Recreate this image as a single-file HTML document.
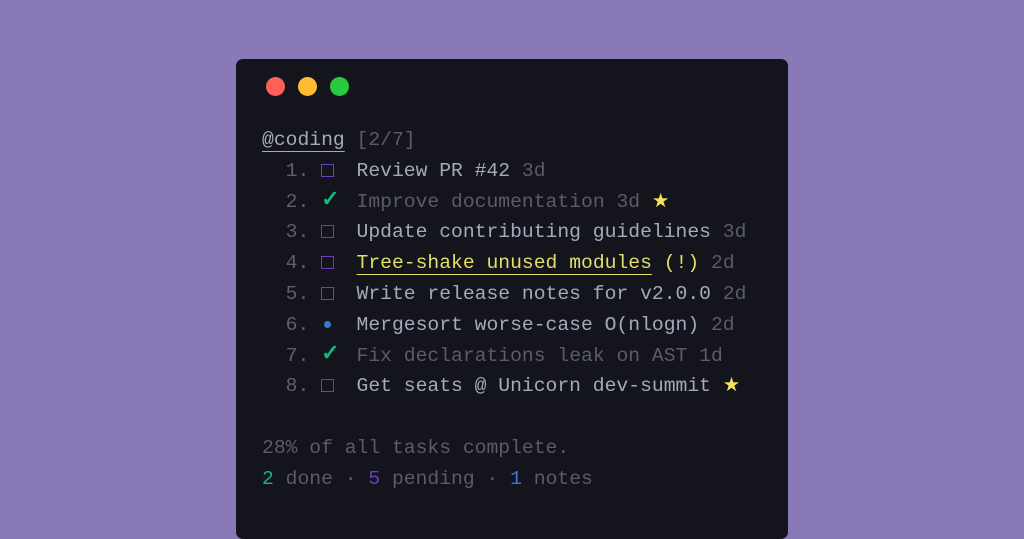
<!DOCTYPE html>
<html><head><style>
html,body{margin:0;padding:0;width:1024px;height:512px;overflow:hidden;background:#8a79b8;}
.card{position:absolute;left:236px;top:59px;width:552px;height:480px;background:#13141c;border-radius:7px;}
.dot{position:absolute;top:18px;width:19px;height:19px;border-radius:50%;}
.txt{position:absolute;left:26px;top:66px;font-family:"Liberation Mono",monospace;font-size:19.7px;line-height:30.8px;color:#a6a9bb;white-space:pre;}
.d{color:#5b5c64}
.n{color:#5f606a}
.i{display:inline-block;width:23.64px;text-align:left;vertical-align:top;height:30.8px;position:relative}
.b{position:absolute;left:0px;top:8px;width:13px;height:13px;border:1.6px solid #6a3fc4;box-sizing:border-box}
.c{position:absolute;left:0px;top:-1px;font-size:22px;font-weight:bold}
.dt{position:absolute;left:3px;top:11px;width:7px;height:7px;border-radius:50%;background:#3a77d6}
.g{color:#16b57c}
.bl{color:#3a77d6}
.p{color:#6a3fc4}
.y{color:#e4df6a}
.s{color:#f4e35a}
.u{text-decoration:underline;text-underline-offset:6px;text-decoration-thickness:1px}
</style></head><body>
<div class="card">
<div class="dot" style="left:30px;background:#fe5f57"></div>
<div class="dot" style="left:62px;background:#febc2e"></div>
<div class="dot" style="left:94px;background:#28c840"></div>
<div class="txt"><span class="u" style="text-decoration-color:#a6a9bb">@coding</span> <span class="d">[2/7]</span>
<span class="n">  1. </span><span class="i"><span class="b"></span></span> Review PR #42 <span class="d">3d</span>
<span class="n">  2. </span><span class="i"><span class="c g">✓</span></span> <span class="d">Improve documentation 3d</span> <span class="s">★</span>
<span class="n">  3. </span><span class="i"><span class="b"></span></span> Update contributing guidelines <span class="d">3d</span>
<span class="n">  4. </span><span class="i"><span class="b"></span></span> <span class="y u">Tree-shake unused modules</span><span class="y"> (!)</span> <span class="d">2d</span>
<span class="n">  5. </span><span class="i"><span class="b"></span></span> Write release notes for v2.0.0 <span class="d">2d</span>
<span class="n">  6. </span><span class="i"><span class="dt"></span></span> Mergesort worse-case O(nlogn) <span class="d">2d</span>
<span class="n">  7. </span><span class="i"><span class="c g">✓</span></span> <span class="d">Fix declarations leak on AST 1d</span>
<span class="n">  8. </span><span class="i"><span class="b"></span></span> Get seats @ Unicorn dev-summit <span class="s">★</span>

<span class="d">28% of all tasks complete.</span>
<span class="g">2</span><span class="d"> done · </span><span class="p">5</span><span class="d"> pending · </span><span class="bl">1</span><span class="d"> notes</span></div>
</div>
</body></html>
